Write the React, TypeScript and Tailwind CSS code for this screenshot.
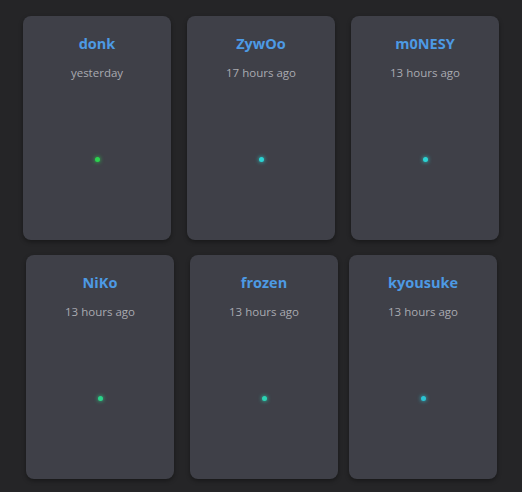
const PLAYERS = [
  { name: "donk", seen: "yesterday", dot: "bg-[#2bd34f] shadow-[0_0_4px_#2bd34f]" },
  { name: "ZywOo", seen: "17 hours ago", dot: "bg-[#2bd4d4] shadow-[0_0_4px_#2bd4d4]" },
  { name: "m0NESY", seen: "13 hours ago", dot: "bg-[#2bd4d4] shadow-[0_0_4px_#2bd4d4]" },
  { name: "NiKo", seen: "13 hours ago", dot: "bg-[#2bd48a] shadow-[0_0_4px_#2bd48a]" },
  { name: "frozen", seen: "13 hours ago", dot: "bg-[#2bd4b4] shadow-[0_0_4px_#2bd4b4]" },
  { name: "kyousuke", seen: "13 hours ago", dot: "bg-[#2bc4d4] shadow-[0_0_4px_#2bc4d4]" },
];

function Card({ p, className = "" }: { p: (typeof PLAYERS)[number]; className?: string }) {
  return (
    <div
      className={`flex h-[224px] w-[148px] flex-none flex-col items-center rounded-[8px] bg-[#3f4048] pt-[18px] shadow-[0_2px_4px_rgba(0,0,0,0.35)] ${className}`}
    >
      <div className="text-[14.5px] font-bold leading-[20px] text-[#4d9ae4]">{p.name}</div>
      <div className="mt-[11px] text-[11.5px] leading-[16px] text-[#a9aab1]">{p.seen}</div>
      <div className={`mt-[76px] h-[5px] w-[5px] rounded-full ${p.dot}`} />
    </div>
  );
}

export default function App() {
  return (
    <div
      className="h-[492px] w-[522px] overflow-hidden bg-[#252527] pt-[16px]"
      style={{ fontFamily: '"Open Sans", "Noto Sans", sans-serif' }}
    >
      <div className="flex gap-[16px] pl-[23px]">
        {PLAYERS.slice(0, 3).map((p) => (
          <Card key={p.name} p={p} />
        ))}
      </div>
      <div className="mt-[15px] flex gap-[16px] pl-[26px]">
        <Card p={PLAYERS[3]} />
        <Card p={PLAYERS[4]} />
        <Card p={PLAYERS[5]} className="-ml-[5px]" />
      </div>
    </div>
  );
}
